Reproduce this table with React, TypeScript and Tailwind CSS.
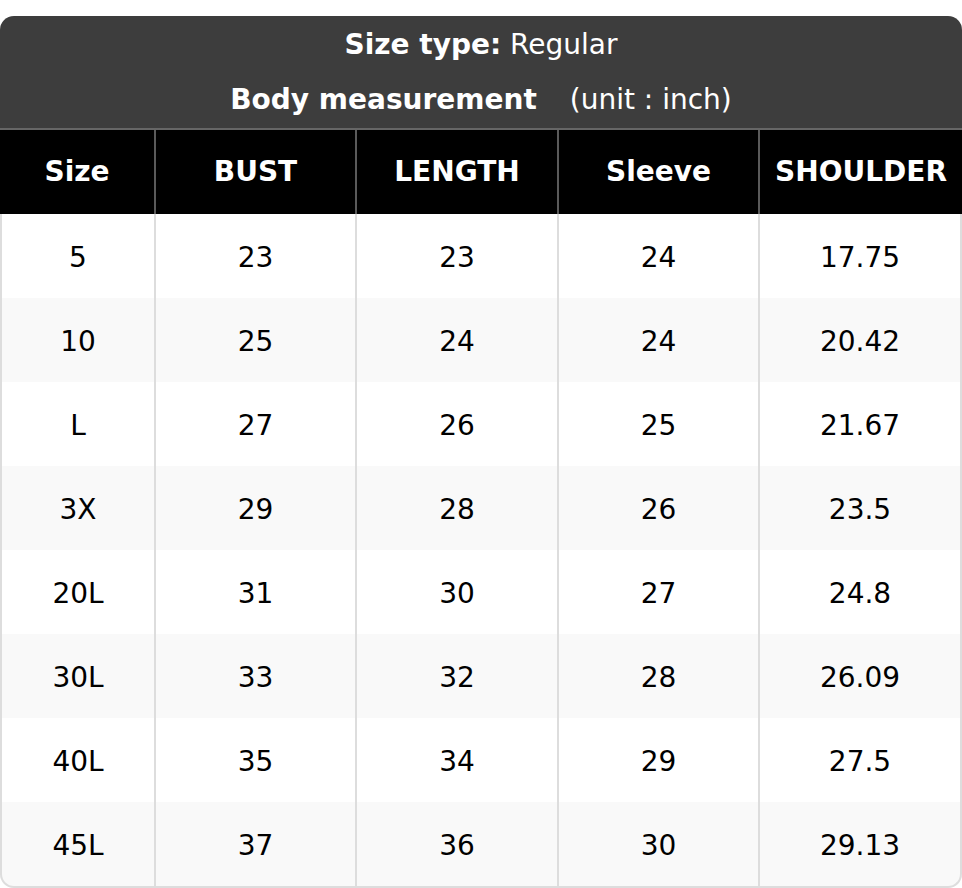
const COLS = ["Size", "BUST", "LENGTH", "Sleeve", "SHOULDER"];

const ROWS: string[][] = [
  ["5", "23", "23", "24", "17.75"],
  ["10", "25", "24", "24", "20.42"],
  ["L", "27", "26", "25", "21.67"],
  ["3X", "29", "28", "26", "23.5"],
  ["20L", "31", "30", "27", "24.8"],
  ["30L", "33", "32", "28", "26.09"],
  ["40L", "35", "34", "29", "27.5"],
  ["45L", "37", "36", "30", "29.13"],
];

const grid = "grid grid-cols-[156px_201px_202px_201px_1fr]";

export default function App() {
  return (
    <div className="min-h-[888px] bg-white pt-4 font-['DejaVu_Sans',sans-serif] text-[28px]">
      <div className="rounded-t-[14px] bg-[#3d3d3d] pt-[1px] text-center text-white">
        <div className="h-[55px] leading-[55px]">
          <span className="font-bold">Size type:</span> Regular
        </div>
        <div className="h-[56px] leading-[55px]">
          <span className="font-bold">Body measurement</span>
          <span className="ml-[24px]"> (unit : inch)</span>
        </div>
      </div>

      <div className={`${grid} border-t-2 border-[#666] bg-black font-bold text-white`}>
        {COLS.map((c, i) => (
          <div
            key={c}
            className={`flex h-[84px] items-center justify-center ${i < COLS.length - 1 ? "border-r-2 border-[#5a5a5a]" : ""}`}
          >
            {c}
          </div>
        ))}
      </div>

      {ROWS.map((row, r) => {
        const last = r === ROWS.length - 1;
        return (
          <div key={r} className={`${grid} ${r % 2 ? "bg-[#f9f9f9]" : "bg-white"} ${last ? "rounded-b-[14px]" : ""} text-black`}>
            {row.map((v, i) => (
              <div
                key={i}
                className={[
                  "flex items-center justify-center border-[#dddddd] pt-[3px]",
                  last ? "h-[86px] border-b-2" : "h-[84px]",
                  i === 0 ? "border-l-2" : "",
                  "border-r-2",
                  last && i === 0 ? "rounded-bl-[14px]" : "",
                  last && i === row.length - 1 ? "rounded-br-[14px]" : "",
                ].join(" ")}
              >
                {v}
              </div>
            ))}
          </div>
        );
      })}
    </div>
  );
}
